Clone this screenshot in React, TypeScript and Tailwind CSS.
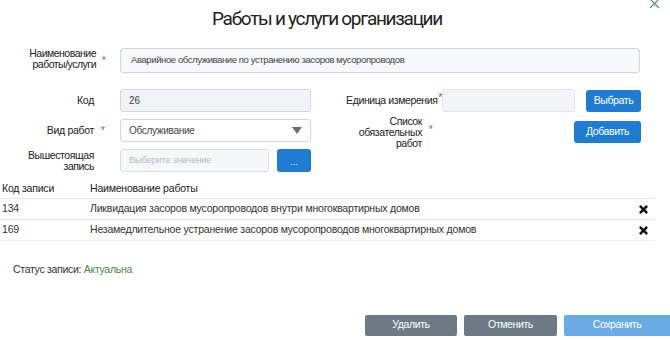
import { X } from "lucide-react";

function Star({ className = "" }: { className?: string }) {
  return <span className={`text-[#e0403a] text-[10px] leading-none ${className}`}>*</span>;
}

function Cross() {
  return (
    <svg width="9" height="9" viewBox="0 0 10 10">
      <path d="M2 2 L8 8 M8 2 L2 8" stroke="#111" strokeWidth="2.8" strokeLinecap="square" />
    </svg>
  );
}

const rows = [
  { code: "134", name: "Ликвидация засоров мусоропроводов внутри многоквартирных домов" },
  { code: "169", name: "Незамедлительное устранение засоров мусоропроводов многоквартирных домов" },
];

export default function App() {
  return (
    <div className="relative w-[670px] h-[340px] overflow-hidden bg-white text-[#222] font-['Liberation_Sans',Arial,sans-serif]">
      {/* close */}
      <X className="absolute right-[7px] -top-[5px] text-[#5a7a95]" size={17} strokeWidth={1.5} />

      <h1 className="pt-[6px] pr-[16px] text-center text-[19px] leading-[26px] text-[#222] font-['Roboto',sans-serif] tracking-[-1.3px]">
        Работы и услуги организации
      </h1>

      {/* name row */}
      <div className="mt-[16px] flex items-center">
        <div className="w-[96px] text-right text-[10.5px] leading-[11px] tracking-[-0.5px] self-start">
          Наименование
          <br />
          работы/услуги
        </div>
        <div className="w-[24px] self-start pl-[6px] -mt-[1px]">
          <Star />
        </div>
        <div className="w-[520px] h-[25px] rounded-[3px] border border-[#d3d7db] bg-[#f7f8fa] flex items-center px-[10px] text-[9.5px] text-[#444] tracking-[-0.4px]">
          Аварийное обслуживание по устранению засоров мусоропроводов
        </div>
      </div>

      {/* middle block */}
      <div className="mt-[16px] flex">
        <div className="w-[330px] flex flex-col gap-[7px]">
          <div className="flex items-center h-[23px]">
            <div className="w-[94px] text-right text-[10.5px] tracking-[-0.3px]">Код</div>
            <div className="w-[26px]" />
            <div className="w-[191px] h-[23px] rounded-[3px] border border-[#d3d7db] bg-[#f1f3f6] flex items-center px-[8px] text-[10px] text-[#444]">
              26
            </div>
          </div>
          <div className="flex items-center h-[23px]">
            <div className="w-[94px] text-right text-[10.5px] tracking-[-0.3px]">Вид работ</div>
            <div className="w-[26px] self-start pl-[7px] -mt-[2px]">
              <Star />
            </div>
            <div className="w-[191px] h-[23px] rounded-[3px] border border-[#d3d7db] bg-white flex items-center justify-between px-[8px] text-[10px] text-[#444] tracking-[-0.3px]">
              Обслуживание
              <svg width="10" height="7" viewBox="0 0 10 7">
                <path d="M0 0 H10 L5 7 Z" fill="#6b6f73" />
              </svg>
            </div>
          </div>
          <div className="flex items-center h-[23px]">
            <div className="w-[94px] text-right text-[10.5px] leading-[11px] tracking-[-0.4px]">
              Вышестоящая
              <br />
              запись
            </div>
            <div className="w-[26px]" />
            <div className="w-[149px] h-[23px] rounded-[3px] border border-[#d9dde1] bg-[#f5f7f9] flex items-center px-[8px] text-[9.5px] text-[#b8bec4] tracking-[-0.3px]">
              Выберите значение
            </div>
            <button className="ml-[8px] w-[34px] h-[23px] rounded-[3px] bg-[#1e7dd2] text-white text-[9px] leading-none pt-[4px]">
              ...
            </button>
          </div>
        </div>

        <div className="w-[311px] flex flex-col gap-[7px]">
          <div className="flex items-center h-[23px]">
            <div className="w-[112px] text-right text-[10.5px] tracking-[-0.4px] whitespace-nowrap">
              Единица измерения
              <Star className="relative -top-[3px] ml-[1px]" />
            </div>
            <div className="w-[133px] h-[23px] rounded-[3px] border border-[#dfe2e5] bg-[#f2f4f7]" />
            <button className="ml-[11px] w-[55px] h-[22px] rounded-[3px] bg-[#1e7dd2] text-white text-[10.5px] tracking-[-0.4px]">
              Выбрать
            </button>
          </div>
          <div className="flex items-start">
            <div className="w-[92px] text-right text-[10.5px] leading-[11px] tracking-[-0.4px] -mt-[3px]">
              Список
              <br />
              обязательных
              <br />
              работ
            </div>
            <div className="pl-[7px] -mt-[3px]">
              <Star />
            </div>
            <div className="flex-1" />
            <button className="mt-[2px] w-[67px] h-[22px] rounded-[3px] bg-[#1e7dd2] text-white text-[10.5px] tracking-[-0.4px]">
              Добавить
            </button>
          </div>
        </div>
      </div>

      {/* table */}
      <div className="mt-[7px] w-[655px] text-[10.5px] tracking-[-0.2px]">
        <div className="flex items-center h-[19px]">
          <div className="w-[90px] pl-[2px]">Код записи</div>
          <div className="flex-1">Наименование работы</div>
        </div>
        {rows.map((r) => (
          <div key={r.code} className="flex items-center h-[21px] border-t border-[#e3e5e8] text-[#333]">
            <div className="w-[90px] pl-[2px]">{r.code}</div>
            <div className="flex-1">{r.name}</div>
            <div className="w-[24px] flex justify-center">
              <Cross />
            </div>
          </div>
        ))}
        <div className="border-t border-[#f0f1f3]" />
      </div>

      <div className="mt-[21px] pl-[13px] text-[10.5px] tracking-[-0.3px] text-[#333]">
        Статус записи: <span className="text-[#4c8a3c]">Актуальна</span>
      </div>

      <div className="mt-[37px] flex justify-end gap-[7px]">
        <button className="w-[92px] h-[21px] rounded-[2px] bg-[#6c7a85] text-white text-[10.5px] tracking-[-0.4px]">
          Удалить
        </button>
        <button className="w-[93px] h-[21px] rounded-[2px] bg-[#6c7a85] text-white text-[10.5px] tracking-[-0.4px]">
          Отменить
        </button>
        <button className="w-[106px] h-[21px] rounded-l-[2px] bg-[#69abe4] text-white text-[10.5px] tracking-[-0.4px]">
          Сохранить
        </button>
      </div>
    </div>
  );
}
